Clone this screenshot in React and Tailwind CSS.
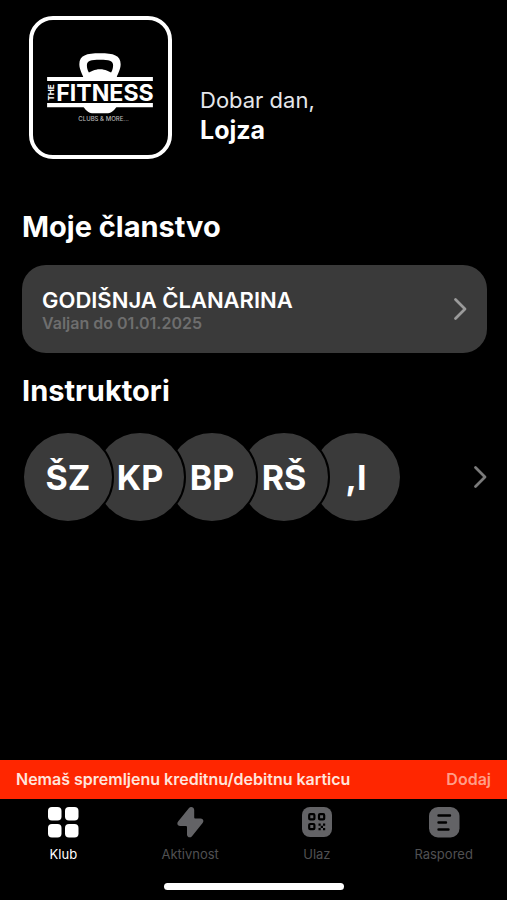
import React from "react";
import clsx from "clsx";

const instructors = ["ŠZ", "KP", "BP", "RŠ", ",I"];

const Logo = () => (
  <svg viewBox="4 4 134 134" className="h-full w-full" role="img" aria-label="The Fitness">
    {/* Kettlebell */}
    <path
      fill="#fff"
      fillRule="evenodd"
      d="M54 61c-1-3-4-8-4-13 0-9 7-11 20.500-11S91 39 91 48c0 5-3 10-4 13zM59.500 56c3-.5 5-3 11-3s8 2.500 11 3c1.500-2 2-5 2-7 0-4.500-4-5.500-13-5.500s-13 1-13 5.500c0 2 .5 5 2 7z"
    />
    <path fill="#fff" d="M54 90c3 4.500 6 6.500 10 6.500h13c4 0 7-2 10-6.500z" />
    <path fill="#fff" d="M18 60.500h105v4H18zM18 86.500h105v4H18z" />
    <text x="27" y="84" fill="#fff" fontSize="23" fontWeight="700" fontFamily="Inter, sans-serif">
      FITNESS
    </text>
    <text
      transform="translate(25 84) rotate(-90)"
      fill="#fff"
      fontSize="8"
      fontWeight="700"
      fontFamily="Inter, sans-serif"
    >
      THE
    </text>
    <text x="49" y="104" fill="#b5b5b5" fontSize="6" fontWeight="500" fontFamily="Inter, sans-serif">
      CLUBS &amp; MORE...
    </text>
  </svg>
);

const Chevron = ({ className }) => (
  <svg
    viewBox="0 0 14 24"
    className={clsx("h-6 w-3.5 shrink-0", className)}
    fill="none"
    stroke="currentColor"
    strokeWidth="2.800"
    strokeLinecap="round"
    strokeLinejoin="round"
    aria-hidden="true"
  >
    <path d="M2.500 2.500 12 12 2.500 21.500" />
  </svg>
);

const GridIcon = () => (
  <svg viewBox="0 0 32 32" className="size-8" fill="currentColor" aria-hidden="true">
    <rect x="1" y="1" width="13.500" height="13.500" rx="4" />
    <rect x="18" y="1" width="13.500" height="13.500" rx="4" />
    <rect x="1" y="18" width="13.500" height="13.500" rx="4" />
    <rect x="18" y="18" width="13.500" height="13.500" rx="4" />
  </svg>
);

const BoltIcon = () => (
  <svg viewBox="0 0 32 32" className="size-8" aria-hidden="true">
    <path
      fill="currentColor"
      d="M14.800 2.200C16.700 .1 20.200 1.200 20.200 4v7.200c0 .8.500 1.300 1.300 1.300h5c2.600 0 3.700 2.400 2.100 4.400L18 30.200c-1.900 2.200-5 1.100-5-1.700v-7.200c0-.8-.5-1.300-1.300-1.300H6.200c-2.600 0-3.700-2.400-2.100-4.400z"
    />
  </svg>
);

const QrIcon = () => (
  <svg viewBox="0 0 32 32" className="size-8" aria-hidden="true">
    <rect x="1" y="1" width="30" height="30" rx="8" fill="currentColor" />
    <g fill="none" stroke="#000" strokeWidth="2.200">
      <rect x="8.200" y="8.200" width="5.200" height="5.200" rx="1" />
      <rect x="18" y="8.200" width="5.200" height="5.200" rx="1" />
      <rect x="8.200" y="18" width="5.200" height="5.200" rx="1" />
    </g>
    <path
      fill="#000"
      d="M17.500 17.500h2.200v2.200h-2.200zM22 17.500h2.200v2.200H22zM19.700 19.700H22V22h-2.300zM17.500 22h2.200v2.200h-2.200zM22 22h2.200v2.200H22z"
    />
  </svg>
);

const ScheduleIcon = () => (
  <svg viewBox="0 0 32 32" className="size-8" aria-hidden="true">
    <rect x="1" y="1" width="30.500" height="30.500" rx="9" fill="currentColor" />
    <path
      fill="none"
      stroke="#000"
      strokeWidth="2.400"
      strokeLinecap="round"
      d="M10.500 9.500h11.500M10.500 16.500h7.500M10.500 23.500h10"
    />
  </svg>
);

const tabs = [
  { label: "Klub", icon: GridIcon, active: true },
  { label: "Aktivnost", icon: BoltIcon },
  { label: "Ulaz", icon: QrIcon },
  { label: "Raspored", icon: ScheduleIcon },
];

const App = () => {
  return (
    <div className="flex min-h-screen flex-col bg-black font-['Inter',sans-serif] text-white">
      <main className="flex-1 pt-4 pr-5 pl-[22px]">
        {/* Greeting */}
        <header className="flex items-center gap-7 pl-[7px]">
          <div className="size-[143px] shrink-0 overflow-hidden rounded-3xl border-4 border-white">
            <Logo />
          </div>
          <div className="pt-[54px]">
            <p className="text-[22px] leading-[30px] text-gray-200">Dobar dan,</p>
            <p className="text-[25px] leading-[30px] font-bold">Lojza</p>
          </div>
        </header>

        {/* Membership */}
        <section className="mt-12">
          <h2 className="text-[29px] leading-10 font-bold">Moje članstvo</h2>
          <button
            type="button"
            className="mt-[18px] flex w-full items-center justify-between rounded-3xl bg-[#3a3a3a] px-5 py-[21px] text-left"
          >
            <span>
              <span className="block text-[22px] leading-7 font-semibold">GODIŠNJA ČLANARINA</span>
              <span className="block text-base leading-[18px] font-semibold text-[#6e6e6e]">
                Valjan do 01.01.2025
              </span>
            </span>
            <Chevron className="text-[#9a9a9a]" />
          </button>
        </section>

        {/* Instructors */}
        <section className="mt-[18px]">
          <h2 className="text-[29px] leading-10 font-bold">Instruktori</h2>
          <button type="button" className="mt-5 flex w-full items-center justify-between">
            <span className="flex">
              {instructors.map((name, i) => (
                <span
                  key={name}
                  style={{ zIndex: instructors.length - i }}
                  className="relative -mr-5 flex size-[92px] items-center justify-center rounded-full border-2 border-black bg-[#3a3a3a] text-[34px] font-bold"
                >
                  {name}
                </span>
              ))}
            </span>
            <Chevron className="text-[#7a7a7a]" />
          </button>
        </section>
      </main>

      {/* Missing card notice */}
      <div className="flex items-center justify-between bg-[#ff2600] px-4 py-2 text-base leading-[23px] font-semibold">
        <p className="text-[#ffe4dc]">Nemaš spremljenu kreditnu/debitnu karticu</p>
        <button type="button" className="text-[#ff9d87]">
          Dodaj
        </button>
      </div>

      <nav className="grid grid-cols-4 pt-[7px]">
        {tabs.map(({ label, icon: Icon, active }) => (
          <button
            key={label}
            type="button"
            className={clsx(
              "flex flex-col items-center gap-1.5",
              active ? "text-white" : "text-[#636366]"
            )}
          >
            <Icon />
            <span className={clsx("text-[13px] leading-5", !active && "text-[#505052]")}>
              {label}
            </span>
          </button>
        ))}
      </nav>

      {/* Home indicator */}
      <div className="mx-auto mt-[19px] mb-[10px] h-[7px] w-[180px] rounded-full bg-white" />
    </div>
  );
};

export default App;
